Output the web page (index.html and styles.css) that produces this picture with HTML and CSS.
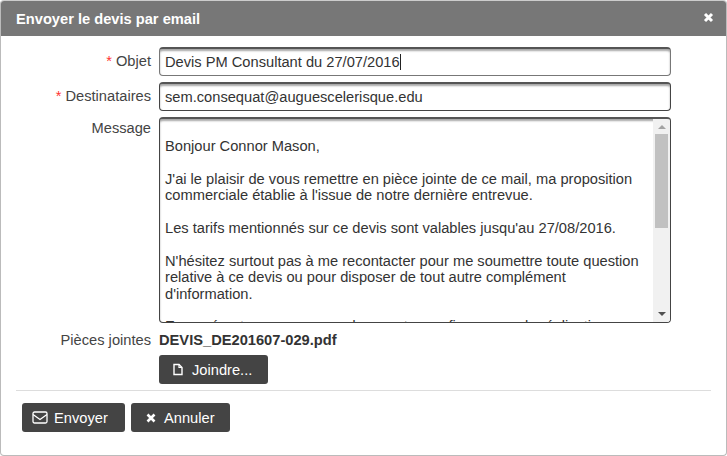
FILE: index.html
```html
<!DOCTYPE html>
<html lang="fr">
<head>
    <meta charset="UTF-8">
    <meta name="viewport" content="width=device-width, initial-scale=1.0">
    <title>Envoyer le devis par email</title>
    <link rel="stylesheet" href="styles.css">
</head>
<body>
    <div class="dialog">
        <div class="dialog-title">
            <span>Envoyer le devis par email</span>
            <svg class="close-icon" width="11" height="11" viewBox="0 0 11 11"><path d="M2 2l7 7M9 2l-7 7" stroke="#fff" stroke-width="3"/></svg>
        </div>

        <div class="dialog-body">
            <div class="row">
                <label class="field-label"><span class="req">*</span> Objet</label>
                <div class="field"><div class="input input-light">Devis PM Consultant du 27/07/2016<span class="caret"></span></div></div>
            </div>
            <div class="row">
                <label class="field-label"><span class="req">*</span> Destinataires</label>
                <div class="field"><div class="input">sem.consequat@auguescelerisque.edu</div></div>
            </div>
            <div class="row">
                <label class="field-label label-message">Message</label>
                <div class="field">
                    <div class="textarea">
                        <div class="textarea-text">
                            <p>Bonjour Connor Mason,</p>
                            <p>J'ai le plaisir de vous remettre en pièce jointe de ce mail, ma proposition commerciale établie à l'issue de notre dernière entrevue.</p>
                            <p>Les tarifs mentionnés sur ce devis sont valables jusqu'au 27/08/2016.</p>
                            <p>N'hésitez surtout pas à me recontacter pour me soumettre toute question relative à ce devis ou pour disposer de tout autre complément d'information.</p>
                            <p>En espérant que vous accorderez votre confiance pour la réalisation</p>
                        </div>
                        <div class="scrollbar">
                            <span class="arrow-up"></span>
                            <div class="scroll-track"><div class="scroll-thumb"></div></div>
                            <span class="arrow-down"></span>
                        </div>
                    </div>
                </div>
            </div>
            <div class="row row-attach">
                <label class="field-label">Pièces jointes</label>
                <div class="field">
                    <div class="file-name">DEVIS_DE201607-029.pdf</div>
                    <button class="btn btn-join">
                        <svg width="12" height="13" viewBox="0 0 12 13"><path d="M2 1.5h5l3 3v7H2z" fill="none" stroke="#fff" stroke-width="1.4"/><path d="M7 1.5v3h3" fill="none" stroke="#fff" stroke-width="1.2"/></svg>
                        Joindre...
                    </button>
                </div>
            </div>
        </div>

        <div class="dialog-footer">
            <button class="btn btn-send">
                <svg width="16" height="13" viewBox="0 0 16 13"><rect x="1" y="1" width="14" height="11" rx="1.5" fill="none" stroke="#fff" stroke-width="1.3"/><path d="M1 3.5l7 5 7-5" fill="none" stroke="#fff" stroke-width="1.3"/></svg>
                Envoyer
            </button>
            <button class="btn btn-cancel">
                <svg width="10" height="10" viewBox="0 0 10 10"><path d="M1.5 1.5l7 7M8.5 1.5l-7 7" stroke="#fff" stroke-width="2.6"/></svg>
                Annuler
            </button>
        </div>
    </div>
</body>
</html>
```

FILE: styles.css
```css
html, body {
    margin: 0;
    padding: 0;
    height: 100%;
    overflow: hidden;
    background: #fff;
}

body {
    font-family: "Liberation Sans", Arial, sans-serif;
    font-size: 14.667px;
    color: #333;
}

.dialog {
    box-sizing: border-box;
    width: 727px;
    height: 456px;
    border: 1px solid #bbb;
    border-top: 1px solid #ccc;
    border-radius: 4px;
    overflow: hidden;
}

.dialog-title {
    height: 35px;
    background: #777;
    color: #fff;
    font-weight: bold;
    display: flex;
    align-items: center;
    justify-content: space-between;
    padding: 1px 12px 0 15px;
    box-sizing: border-box;
}

.close-icon {
    margin-top: -3px;
}

.dialog-body {
    padding-top: 11px;
}

.row {
    display: flex;
    gap: 8px;
    margin-bottom: 6px;
}

.field-label {
    width: 150px;
    text-align: right;
    line-height: 29px;
    color: #444;
    flex-shrink: 0;
}

.label-message {
    line-height: 23px;
}

.req {
    color: #f33;
}

.field {
    width: 512px;
}

.input {
    box-sizing: border-box;
    height: 29px;
    line-height: 26px;
    padding: 0 5px;
    border: 1px solid #444;
    border-top: 2px solid #555;
    border-radius: 4px;
    box-shadow: inset 0 2px 2px rgba(0, 0, 0, 0.35);
    white-space: nowrap;
}

.input-light {
    border-color: #777;
    border-top-color: #555;
}

.caret {
    display: inline-block;
    width: 1px;
    height: 16px;
    background: #222;
    vertical-align: -3px;
}

.textarea {
    box-sizing: border-box;
    height: 206px;
    display: flex;
    border: 1px solid #444;
    border-top: 2px solid #555;
    border-radius: 4px;
    box-shadow: inset 0 2px 2px rgba(0, 0, 0, 0.35);
    overflow: hidden;
}

.textarea-text {
    flex: 1;
    padding: 19px 5px 0;
    line-height: 16.4px;
    overflow: hidden;
}

.textarea-text p {
    margin: 0 0 16.4px;
}

.scrollbar {
    width: 17px;
    background: #f1f1f1;
    display: flex;
    flex-direction: column;
    align-items: center;
}

.arrow-up, .arrow-down {
    width: 0;
    height: 0;
    border-left: 4px solid transparent;
    border-right: 4px solid transparent;
}

.arrow-up {
    margin: 6px 0 5px;
    border-bottom: 4px solid #a3a3a3;
}

.arrow-down {
    margin: 5px 0 6px;
    border-top: 4px solid #505050;
}

.scroll-track {
    flex: 1;
    width: 100%;
}

.scroll-thumb {
    width: 13px;
    height: 94px;
    margin: 0 auto;
    background: #c1c1c1;
}

.row-attach {
    margin-top: 7px;
    margin-bottom: 0;
}

.row-attach .field-label {
    line-height: 20px;
}

.file-name {
    font-weight: bold;
    line-height: 20px;
}

.btn {
    height: 29px;
    border: 0;
    border-radius: 3px;
    background: #444;
    color: #fff;
    font-family: inherit;
    font-size: 14.667px;
    display: inline-flex;
    align-items: center;
}

.btn-join {
    margin-top: 5px;
    width: 109px;
    padding: 0 0 0 13px;
    gap: 8px;
}

.btn-send {
    width: 103px;
    padding: 0 0 0 10px;
    gap: 6px;
}

.btn-cancel {
    width: 99px;
    padding: 0 0 0 15px;
    gap: 8px;
}

.dialog-footer {
    margin: 6px 15px 0;
    padding: 12px 6px 0;
    border-top: 1px solid #ddd;
    display: flex;
    gap: 6px;
}
```
